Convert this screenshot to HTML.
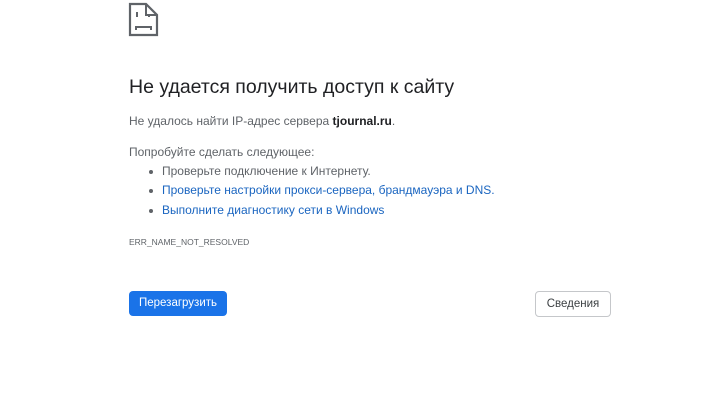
<!DOCTYPE html>
<html><head><meta charset="utf-8"><style>
body{margin:0;width:720px;height:405px;background:#fff;font-family:"Liberation Sans",sans-serif;position:relative;overflow:hidden}
.a{position:absolute;white-space:nowrap}
h1{margin:0;font-weight:normal;font-size:19.5px;color:#202124}
.t{font-size:12px;color:#5f6368}
.l{color:#1a65c0}
.b{position:absolute;left:129px;top:291px;width:98px;height:25px;background:#1a73e8;border-radius:4px;color:#fff;font-size:11.5px;line-height:25px;text-align:center}
.d{position:absolute;left:535px;top:291px;width:74px;height:24px;border:1px solid #c5c7ca;border-radius:4px;color:#3c4043;font-size:11.5px;line-height:24px;text-align:center}
.dot{display:inline-block;width:4px;height:4px;border-radius:50%;background:#5f6368;margin-right:9px;vertical-align:middle}
</style></head><body>
<svg class="a" style="left:127px;top:0" width="34" height="40" viewBox="0 0 34 40">
<path d="M3 4H19L30 15V35H3Z" fill="none" stroke="#5f6368" stroke-width="2.2"/>
<path d="M19 4V15H30" fill="none" stroke="#5f6368" stroke-width="2"/>
<rect x="9" y="12" width="2" height="5" fill="#5f6368"/>
<rect x="21" y="14" width="2" height="3" fill="#5f6368"/>
<path d="M9 30V27H24V30" fill="none" stroke="#5f6368" stroke-width="2"/>
</svg>
<h1 class="a" style="left:129px;top:76px">Не удается получить доступ к сайту</h1>
<div class="a t" style="left:129px;top:114px">Не удалось найти IP-адрес сервера <b style="color:#202124">tjournal.ru</b>.</div>
<div class="a t" style="left:129px;top:145px">Попробуйте сделать следующее:</div>
<div class="a t" style="left:149px;top:164px"><span class="dot"></span>Проверьте подключение к Интернету.</div>
<div class="a t l" style="left:149px;top:183px"><span class="dot"></span>Проверьте настройки прокси-сервера, брандмауэра и DNS.</div>
<div class="a t l" style="left:149px;top:203px"><span class="dot"></span>Выполните диагностику сети в Windows</div>
<div class="a" style="left:129px;top:237px;font-size:8.5px;color:#5f6368">ERR_NAME_NOT_RESOLVED</div>
<div class="b">Перезагрузить</div>
<div class="d">Сведения</div>
</body></html>
